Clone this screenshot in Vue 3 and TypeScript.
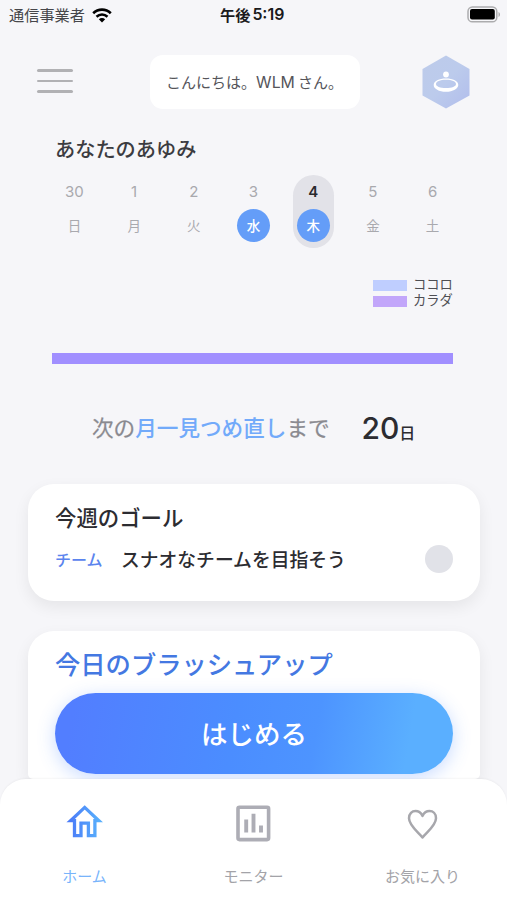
<script setup lang="ts">
interface Day {
  date: number
  label: string
  done?: boolean
  today?: boolean
}

const days: Day[] = [
  { date: 30, label: '日' },
  { date: 1, label: '月' },
  { date: 2, label: '火' },
  { date: 3, label: '水', done: true },
  { date: 4, label: '木', done: true, today: true },
  { date: 5, label: '金' },
  { date: 6, label: '土' },
]
</script>

<template>
  <div class="screen">
    <div class="status">
      <div class="carrier">
        <span>通信事業者</span>
        <svg class="wifi" width="20" height="15" viewBox="0 0 20 15" fill="none">
          <path d="M1.2 5.3C6.2.4 13.8.4 18.8 5.3M4.5 8.7c3.2-3 7.8-3 11 0" stroke="#000" stroke-width="2.6" />
          <path d="M6.8 11.2c1.9-1.6 4.5-1.6 6.4 0L10 14.4z" fill="#000" />
        </svg>
      </div>
      <div class="clock"><span>午後</span><span class="digits">5:19</span></div>
      <svg class="battery" width="34" height="17" viewBox="0 0 34 17">
        <rect x="1" y="1" width="28.8" height="14.8" rx="4.4" fill="none" stroke="#acacae" stroke-width="1.5" />
        <rect x="3" y="3" width="24.8" height="10.6" rx="2" />
        <path d="M31.5 6v5c2-.8 2-4.200 0-5z" fill="#acacae" />
      </svg>
    </div>

    <header class="header">
      <button class="menu" aria-label="メニュー"><i></i><i></i><i></i></button>
      <div class="bubble">こんにちは。<span class="name">WLM</span>さん。</div>
      <svg class="badge" width="48" height="54" viewBox="0 0 48 54">
        <defs>
          <linearGradient id="hex" x1="0" y1="0" x2="1" y2="1">
            <stop offset="0" stop-color="#bdcbea" />
            <stop offset=".5" stop-color="#bccbec" />
            <stop offset="1" stop-color="#b1bdec" />
          </linearGradient>
        </defs>
        <path d="M24 .5 47.500 14v26.500L24 53.500.5 40.500V14z" fill="url(#hex)" />
        <circle cx="24" cy="19.500" r="2.900" fill="#fff" />
        <path fill="#fff" fill-rule="evenodd" d="M24 23.500c7 0 12.300 2.700 12.300 6.400S31 36.700 24 36.700s-12.300-3-12.300-6.800 5.300-6.400 12.300-6.400zm0 1.200c-6 0-10 1.800-10 4.300s4 4 10 4 10-1.500 10-4-4-4.300-10-4.300z" />
      </svg>
    </header>

    <main class="content">
      <h1 class="heading">あなたのあゆみ</h1>
      <div class="week">
        <div v-for="d in days" :key="d.date" class="day" :class="{ today: d.today, done: d.done }">
          <span class="date">{{ d.date }}</span>
          <span class="weekday">{{ d.label }}</span>
        </div>
      </div>

      <div class="legend">
        <div class="legend-row"><i class="swatch mind"></i><span>ココロ</span></div>
        <div class="legend-row"><i class="swatch body"></i><span>カラダ</span></div>
      </div>
      <div class="chart-bar"></div>

      <div class="countdown">
        <span class="until">次の<b>月一見つめ直し</b>まで</span>
        <span class="count">20</span><span class="unit">日</span>
      </div>

      <section class="card goal">
        <h2>今週のゴール</h2>
        <div class="goal-row">
          <span class="tag">チーム</span>
          <span class="goal-text">スナオなチームを目指そう</span>
          <i class="check"></i>
        </div>
      </section>

      <section class="card brush">
        <h2>今日のブラッシュアップ</h2>
        <button class="start">はじめる</button>
      </section>
    </main>

    <nav class="tabs">
      <a class="tab active">
        <svg width="38" height="38" viewBox="0 0 38 38" fill="none">
          <defs>
            <linearGradient id="home" x1="0" y1="0" x2="1" y2="0">
              <stop offset="0" stop-color="#4b7df8" />
              <stop offset="1" stop-color="#58aefc" />
            </linearGradient>
          </defs>
          <path d="M4.600 16.700 18.700 3.400l14.100 13.300h-3.900v15h-6.500V19.200h-7.400v12.500H8.500v-15z" stroke="url(#home)" stroke-width="3.300" />
        </svg>
        <span>ホーム</span>
      </a>
      <a class="tab">
        <svg width="38" height="38" viewBox="0 0 38 38" fill="none" stroke="#adadb5">
          <rect x="3" y="3.200" width="30.600" height="32.400" rx="1.500" stroke-width="3.600" />
          <path d="M11.200 15.500v13M18.500 9.800v18.700M26 21.500v7" stroke-width="3.900" />
        </svg>
        <span>モニター</span>
      </a>
      <a class="tab">
        <svg width="38" height="38" viewBox="0 0 38 38" fill="none">
          <path d="M18.500 33.500C14 28 5 21.500 5 14.300 5 9.500 8.100 7.100 11.500 7.100c3.300 0 5.500 1.900 7 4.800 1.500-2.900 3.700-4.800 7-4.800 3.400 0 6.500 2.400 6.500 7.200 0 7.200-9 13.700-13.500 19.200z" stroke="#a7a7ac" stroke-width="2.500" stroke-linejoin="round" />
        </svg>
        <span>お気に入り</span>
      </a>
    </nav>
  </div>
</template>

<style>
body {
  margin: 0;
}
</style>

<style scoped>
* {
  box-sizing: border-box;
}
.screen {
  width: 507px;
  height: 900px;
  overflow: hidden;
  display: flex;
  flex-direction: column;
  background: #f6f6f9;
  color: #2c2c31;
  font-family: 'Noto Sans CJK JP', sans-serif;
  white-space: nowrap;
}
h1,
h2 {
  margin: 0;
}
button {
  border: 0;
  padding: 0;
  font: inherit;
}
.status {
  height: 30px;
  flex: none;
  display: grid;
  grid-template-columns: 211px auto 1fr;
  align-items: center;
  padding: 0 6px 0 9px;
}
.carrier {
  display: flex;
  align-items: center;
  gap: 7px;
  font-size: 15.200px;
  line-height: 28px;
  color: #46464a;
}
.carrier span,
.clock {
  margin-top: -2px;
}
.clock {
  display: flex;
  align-items: center;
  gap: 2px;
  color: #1a1a1c;
  font-size: 15.200px;
  line-height: 28px;
  font-weight: 700;
}
.digits {
  padding-top: 2px;
  font-family: Inter, sans-serif;
  font-weight: 600;
  font-size: 15.900px;
}
.battery {
  justify-self: end;
  margin-top: -2px;
}
.header {
  height: 104px;
  flex: none;
  display: flex;
  align-items: center;
  justify-content: space-between;
  padding: 0 37px;
}
.menu {
  width: 36px;
  margin-top: -2px;
  display: flex;
  flex-direction: column;
  gap: 7.600px;
  background: none;
}
.menu i {
  height: 2.700px;
  border-radius: 2px;
  background: #b1b1b4;
}
.bubble {
  width: 210px;
  height: 54px;
  margin-left: 14px;
  border-radius: 13px;
  background: #fff;
  text-align: center;
  font-size: 15px;
  line-height: 53px;
  color: #55555a;
}
.name {
  font-family: Inter, sans-serif;
  font-size: 15.800px;
  margin-right: 3px;
}
.content {
  height: 645px;
  flex: none;
  overflow: hidden;
  display: flex;
  flex-direction: column;
}
.heading {
  height: 30px;
  padding-left: 55px;
  font-size: 20.200px;
  line-height: 30px;
  font-weight: 500;
  color: #3c3c41;
}
.week {
  display: grid;
  grid-template-columns: repeat(7, 59.700px);
  justify-content: center;
  justify-items: center;
  margin-top: 11px;
}
.day {
  width: 41px;
  height: 73px;
  border-radius: 21px;
  display: flex;
  flex-direction: column;
  align-items: center;
  color: #a9a9ae;
}
.date {
  height: 33.500px;
  font-family: Inter, sans-serif;
  font-size: 15px;
  line-height: 33px;
}
.weekday {
  width: 33px;
  height: 33px;
  border-radius: 50%;
  text-align: center;
  font-size: 13.500px;
  line-height: 33px;
}
.done .weekday {
  background: #649df8;
  color: #fff;
  font-weight: 500;
}
.today {
  background: #e2e2e8;
}
.today .date {
  color: #29292d;
  font-weight: 600;
}
.legend {
  margin: 29px 0 0 373px;
}
.legend-row {
  height: 16px;
  display: flex;
  align-items: center;
  gap: 6px;
  font-size: 13.300px;
  line-height: 14px;
  color: #4e4e53;
}
.legend-row span {
  padding-bottom: 2px;
}
.swatch {
  width: 34px;
  height: 11px;
}
.mind {
  background: #bfceff;
}
.body {
  background: #c2a6fa;
}
.chart-bar {
  width: 401px;
  height: 11px;
  flex: none;
  margin: 44px 0 0 52px;
  background: #a18fff;
}
.countdown {
  height: 44px;
  flex: none;
  margin: 42px 0 34px 92px;
  display: flex;
  align-items: center;
}
.until {
  width: 269.500px;
  font-size: 21.600px;
  line-height: 42px;
  padding-bottom: 2px;
  color: #8a8a90;
  -webkit-text-stroke: 0.25px currentColor;
}
.until b {
  font-weight: 500;
  color: #72aafa;
  -webkit-text-stroke: 0;
}
.count {
  font-family: Inter, sans-serif;
  font-size: 30px;
  line-height: 44px;
  font-weight: 500;
}
.unit {
  font-size: 16px;
  line-height: 20px;
  font-weight: 500;
  padding-top: 7px;
}
.card {
  width: 452px;
  flex: none;
  margin-left: 28px;
  background: #fff;
  border-radius: 26px;
  box-shadow: 0 6px 16px rgba(0, 0, 0, 0.07);
}
.goal {
  height: 117px;
  padding: 17px 27px 0;
}
.goal h2 {
  font-size: 21.400px;
  line-height: 32px;
  font-weight: 500;
}
.goal-row {
  height: 28px;
  margin-top: 12px;
  display: flex;
  align-items: center;
}
.tag {
  width: 66px;
  font-size: 16px;
  color: #5b84ee;
  font-weight: 500;
}
.goal-text {
  flex: 1;
  font-size: 18.800px;
  line-height: 28px;
  font-weight: 500;
}
.check {
  width: 28px;
  height: 28px;
  border-radius: 50%;
  background: #e1e2e8;
}
.brush {
  height: 148px;
  margin-top: 30px;
  padding: 13px 27px 0;
  border-radius: 26px 26px 5px 5px;
  overflow: hidden;
}
.brush h2 {
  font-size: 25.300px;
  line-height: 38px;
  font-weight: 500;
  color: #4478e2;
}
.start {
  display: block;
  width: 398px;
  height: 81px;
  margin-top: 11px;
  border-radius: 41px;
  background: linear-gradient(100deg, #527eff 5%, #4b8dff 45%, #4d94ff 65%, #5aafff 88%);
  box-shadow: 0 4px 18px rgba(75, 135, 255, 0.3);
  color: #fff;
  font-size: 26.500px;
  font-weight: 500;
  line-height: 79px;
  padding-bottom: 2px;
}
.tabs {
  height: 121px;
  flex: none;
  display: grid;
  grid-template-columns: repeat(3, 169px);
  background: #fff;
  border-radius: 26px 26px 0 0;
  box-shadow: 0 -1px 2px rgba(0, 0, 0, 0.04);
}
.tab {
  display: flex;
  flex-direction: column;
  align-items: center;
  gap: 22px;
  padding-top: 25px;
  font-size: 15px;
  line-height: 24px;
  color: #a3a3a8;
}
.active {
  color: #78b4fb;
}
</style>
